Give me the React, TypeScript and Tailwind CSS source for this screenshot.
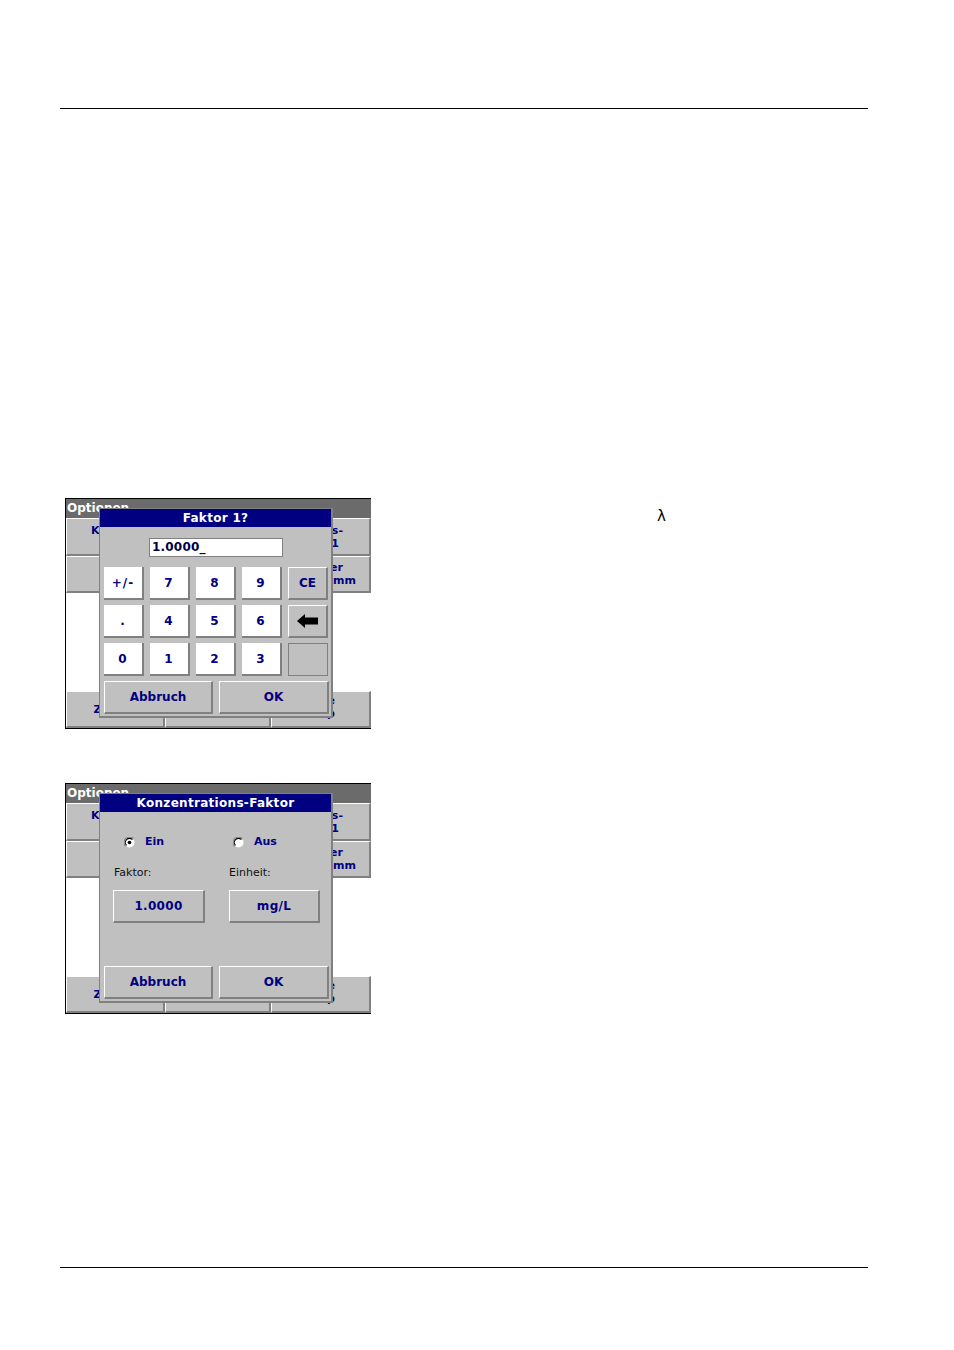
import React from "react"

const navy = "text-[#000080]"

function MenuBtn({ lines, className = "" }: { lines: { t: string; cls: string }[]; className?: string }) {
    return (
        <div className={`h-full bg-[#c0c0c0] border-t border-l border-white border-r-2 border-b-2 border-r-[#808080] border-b-[#808080] flex flex-col justify-center overflow-hidden ${className}`}>
            {lines.map((l, i) => (
                <span key={i} className={`block whitespace-nowrap text-[11px] leading-[13px] font-bold ${navy} ${l.cls}`}>
                    {l.t}
                </span>
            ))}
        </div>
    )
}

function Screen({ title, children }: { title: string; children: React.ReactNode }) {
    return (
        <div className="relative w-[306px] shrink-0 border-l border-t border-b border-black font-['DejaVu_Sans',sans-serif]">
            {/* underlying Optionen menu */}
            <div className="h-[19px] bg-[#6b6b6b] text-white text-[12px] leading-[19px] pl-px font-bold">Optionen</div>
            <div className="flex h-[38px]">
                <MenuBtn className="w-[152px]" lines={[{ t: "Konzentrations-", cls: "pl-[24px]" }, { t: "Faktor", cls: "pl-[50px]" }]} />
                <MenuBtn className="w-[153px]" lines={[{ t: "Ergebnis-", cls: "self-end pr-[26px]" }, { t: "Anzeige 1", cls: "self-end pr-[30px]" }]} />
            </div>
            <div className="flex h-[37px]">
                <MenuBtn className="w-[152px]" lines={[{ t: "Zeitgeber", cls: "pl-[50px]" }]} />
                <MenuBtn className="w-[153px]" lines={[{ t: "Anwender", cls: "self-end pr-[26px]" }, { t: "Programm", cls: "self-end pr-[13px]" }]} />
            </div>
            <div className="h-[98px] bg-white" />
            <div className="flex h-[37px]">
                <MenuBtn className="w-[99px] items-center" lines={[{ t: "Zurück", cls: "" }]} />
                <MenuBtn className="w-[106px] items-center" lines={[{ t: "Messen", cls: "" }]} />
                <MenuBtn className="w-[100px] pb-[4px]" lines={[{ t: "Werte", cls: "self-end pr-[34px]" }, { t: "Setup", cls: "self-end pr-[34px]" }]} />
            </div>

            {/* dialog */}
            <div className="absolute left-[33px] top-[9px] w-[234px] h-[210px] bg-[#c0c0c0] border-l border-t border-r-2 border-b-2 border-[#808080] flex flex-col">
                <div className="h-[18px] bg-[#000080] text-white text-[12px] leading-[18px] font-bold text-center tracking-[0.3px]">{title}</div>
                <div className="flex-1 flex flex-col">
                    {children}
                    <div className="mt-auto mb-[2px] ml-[4px] flex gap-[6px]">
                        <GrayBtn className="w-[109px] h-[33px]">Abbruch</GrayBtn>
                        <GrayBtn className="w-[110px] h-[33px]">OK</GrayBtn>
                    </div>
                </div>
            </div>
        </div>
    )
}

function GrayBtn({ children, className = "" }: { children?: React.ReactNode; className?: string }) {
    return (
        <div className={`bg-[#c0c0c0] border-t border-l border-white border-r-2 border-b-2 border-r-[#808080] border-b-[#808080] flex items-center justify-center text-[12px] font-bold ${navy} ${className}`}>
            {children}
        </div>
    )
}

function WhiteKey({ label }: { label: string }) {
    return (
        <div className={`bg-white border-r-2 border-b-2 border-[#808080] flex items-center justify-center text-[12px] font-bold tracking-[1px] ${navy}`}>
            {label}
        </div>
    )
}

function Radio({ checked }: { checked?: boolean }) {
    return (
        <svg width="11" height="11" viewBox="0 0 12 12">
            <circle cx="6" cy="6" r="5.5" fill="#ffffff" />
            <path d="M1.8 10.2 A5.5 5.5 0 0 1 10.2 1.8" fill="none" stroke="#808080" strokeWidth="1.2" />
            <path d="M2.8 9.2 A4.3 4.3 0 0 1 9.2 2.8" fill="none" stroke="#000000" strokeWidth="1.2" />
            {checked && <circle cx="6" cy="6" r="2" fill="#000000" />}
        </svg>
    )
}

function Keypad() {
    const keys = ["+/-", "7", "8", "9", "CE", ".", "4", "5", "6", "BS", "0", "1", "2", "3", ""]
    return (
        <>
            <div className="mt-[11px] ml-[49px] w-[134px] h-[19px] bg-white border border-[#808080] text-[12px] leading-[17px] pl-[2px] font-bold text-[#00004a] tracking-[0.2px]">
                1.0000_
            </div>
            <div className="mt-[10px] ml-[4px] grid grid-cols-[repeat(5,40px)] grid-rows-[repeat(3,33px)] gap-x-[6px] gap-y-[5px]">
                {keys.map((k, i) => {
                    if (k === "CE") return <GrayBtn key={i}>CE</GrayBtn>
                    if (k === "BS")
                        return (
                            <GrayBtn key={i}>
                                <svg width="22" height="14" viewBox="0 0 22 14">
                                    <polygon points="0,7 8,0 8,3.5 21,3.5 21,10.5 8,10.5 8,14" fill="#000000" />
                                </svg>
                            </GrayBtn>
                        )
                    if (k === "") return <div key={i} className="bg-[#c0c0c0] border border-[#808080]" />
                    return <WhiteKey key={i} label={k} />
                })}
            </div>
        </>
    )
}

function FactorForm() {
    return (
        <>
            <div className="mt-[24px] ml-[24px] flex items-center h-[12px] text-[11px] font-bold">
                <div className="w-[109px] flex items-center gap-[10px]">
                    <Radio checked />
                    <span className={navy}>Ein</span>
                </div>
                <div className="flex items-center gap-[10px]">
                    <Radio />
                    <span className={navy}>Aus</span>
                </div>
            </div>
            <div className="mt-[18px] ml-[14px] flex text-[11px] leading-[14px] text-[#101010]">
                <span className="w-[115px]">Faktor:</span>
                <span>Einheit:</span>
            </div>
            <div className="mt-[10px] ml-[13px] flex gap-[24px]">
                <GrayBtn className="w-[92px] h-[33px] tracking-[0.3px]">1.0000</GrayBtn>
                <GrayBtn className="w-[91px] h-[33px] tracking-[0.3px]">mg/L</GrayBtn>
            </div>
        </>
    )
}

export default function App() {
    return (
        <div className="w-[954px] h-[1350px] bg-white overflow-hidden">
            {/* header rule */}
            <div className="pt-[108px] pl-[60px]">
                <div className="w-[808px] h-px bg-black" />
            </div>

            {/* screen 1 */}
            <div className="mt-[389px] ml-[65px] flex items-start">
                <Screen title="Faktor 1?">
                    <Keypad />
                </Screen>
                <span className="ml-[286px] mt-[9px] text-[15px] leading-[18px] text-black font-['DejaVu_Sans',sans-serif]">λ</span>
            </div>

            {/* screen 2 */}
            <div className="mt-[54px] ml-[65px] flex">
                <Screen title="Konzentrations-Faktor">
                    <FactorForm />
                </Screen>
            </div>

            {/* footer rule */}
            <div className="mt-[253px] pl-[60px]">
                <div className="w-[808px] h-px bg-black" />
            </div>
        </div>
    )
}
